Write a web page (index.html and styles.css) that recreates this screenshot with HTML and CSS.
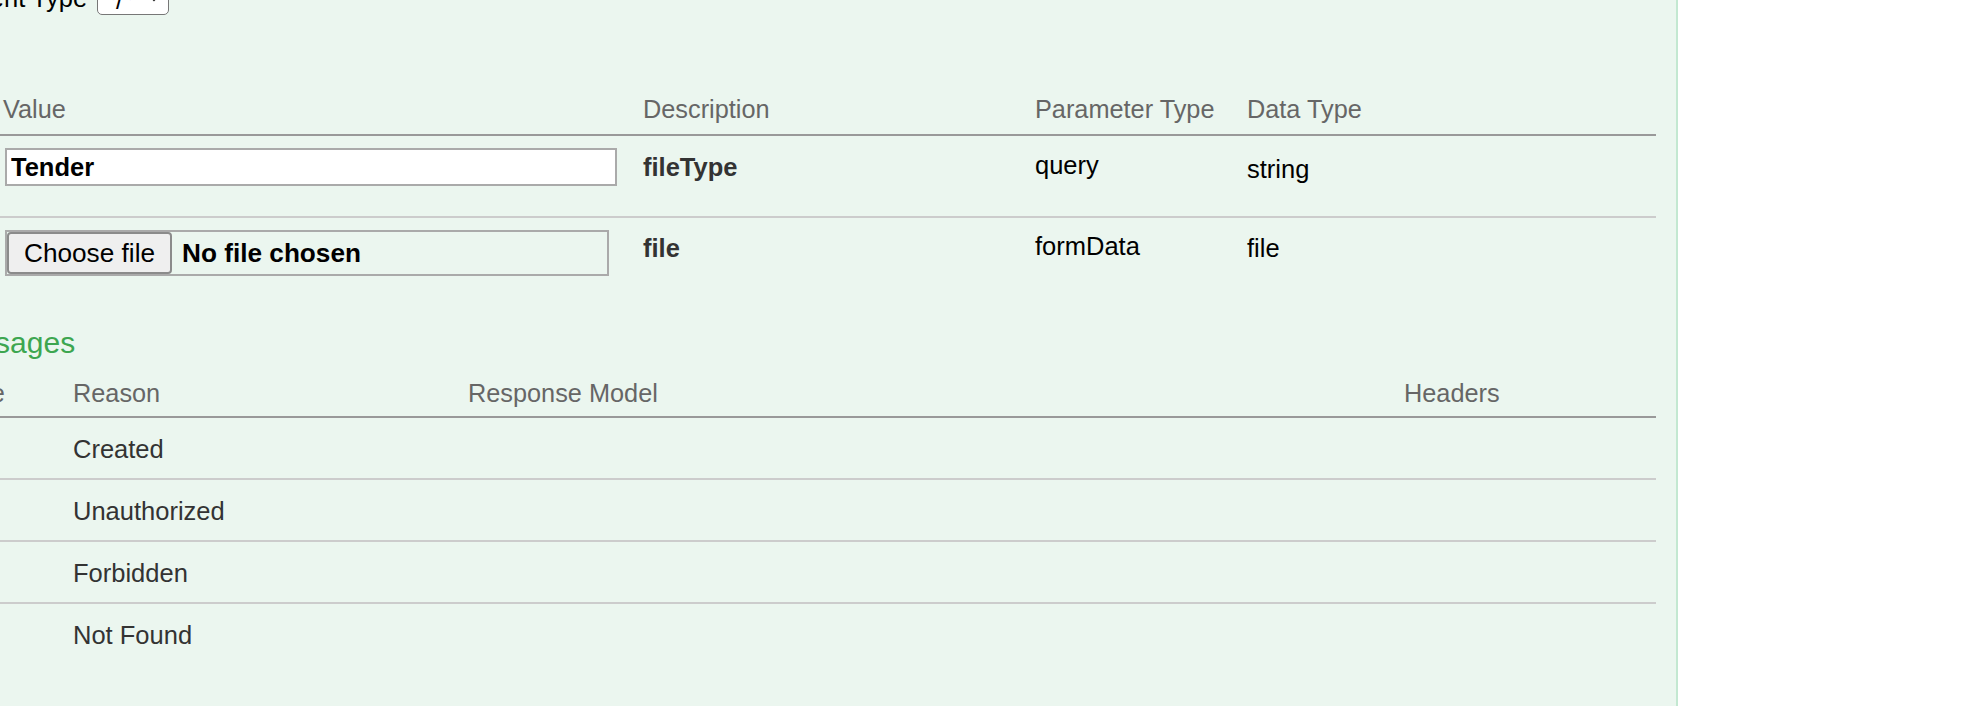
FILE: index.html
```html
<!DOCTYPE html>
<html lang="en">
<head>
<meta charset="utf-8">
<title>Swagger operation</title>
<link rel="stylesheet" href="styles.css">
</head>
<body>
<div class="panel">
  <div class="ct">
    <label class="ct-label">Response Content Type</label>
    <span class="select"><span class="select-val">*/*</span><svg class="chev" width="12" height="8" viewBox="0 0 12 8"><polyline points="1,1 6,6 11,1" fill="none" stroke="#222" stroke-width="2"/></svg></span>
  </div>

  <h4 class="sec-h">Parameters</h4>
  <table class="params">
    <colgroup>
      <col class="p-c1"><col class="p-c2"><col class="p-c3"><col class="p-c4"><col>
    </colgroup>
    <thead>
      <tr><th>Parameter</th><th>Value</th><th>Description</th><th>Parameter Type</th><th>Data Type</th></tr>
    </thead>
    <tbody>
      <tr class="r1">
        <td class="name">fileType</td>
        <td class="val"><input class="text-input" type="text" value="Tender"></td>
        <td class="desc">fileType</td>
        <td class="ptype">query</td>
        <td class="dtype">string</td>
      </tr>
      <tr class="r2">
        <td class="name">file</td>
        <td class="val"><div class="file-input"><span class="file-btn">Choose file</span><span class="file-name">No file chosen</span></div></td>
        <td class="desc">file</td>
        <td class="ptype">formData</td>
        <td class="dtype">file</td>
      </tr>
    </tbody>
  </table>

  <h4 class="sec-h resp-h">Response Messages</h4>
  <table class="resp">
    <colgroup>
      <col class="r-c1"><col class="r-c2"><col class="r-c3"><col>
    </colgroup>
    <thead>
      <tr><th>HTTP Status Code</th><th>Reason</th><th>Response Model</th><th>Headers</th></tr>
    </thead>
    <tbody>
      <tr><td>201</td><td>Created</td><td></td><td></td></tr>
      <tr><td>401</td><td>Unauthorized</td><td></td><td></td></tr>
      <tr><td>403</td><td>Forbidden</td><td></td><td></td></tr>
      <tr><td>404</td><td>Not Found</td><td></td><td></td></tr>
    </tbody>
  </table>
</div>
</body>
</html>
```
FILE: styles.css
```css
html, body {
  margin: 0;
  padding: 0;
  background: #ffffff;
}
body {
  font-family: "Liberation Sans", Arial, Helvetica, sans-serif;
  overflow: hidden;
}
.panel {
  box-sizing: border-box;
  width: 1905px;
  margin: -30px 0 0 -227px;
  padding: 0 20px 42px;
  background: #ebf6ef;
  border-right: 2px solid #c3e8d1;
}

/* content type row */
.ct {
  display: flex;
  align-items: flex-end;
  gap: 10px;
  height: 45px;
  padding-left: 21px;
}
.ct-label {
  font-size: 25.5px;
  line-height: 20px;
  color: #000;
  margin-bottom: 7px;
}
.select {
  box-sizing: border-box;
  width: 72px;
  height: 45px;
  display: flex;
  align-items: flex-end;
  justify-content: space-between;
  padding: 0 8px 4px;
  border: 1.5px solid #777;
  border-radius: 5px;
  background: #fff;
  font-size: 25.5px;
  line-height: 20px;
  color: #000;
}
.chev {
  margin-bottom: 8px;
}

/* headings */
.sec-h {
  font-size: 30px;
  line-height: 36px;
  font-weight: normal;
  color: #3da650;
  margin: 20px 0 23px;
}
.resp-h {
  margin: 19px 0 17px 2px;
}

/* tables */
table {
  width: 100%;
  border-collapse: separate;
  border-spacing: 0;
  table-layout: fixed;
}
.p-c1 { width: 210px; }
.p-c2 { width: 640px; }
.p-c3 { width: 392px; }
.p-c4 { width: 212px; }
.r-c1 { width: 280px; }
.r-c2 { width: 395px; }
.r-c3 { width: 936px; }

th {
  text-align: left;
  font-weight: normal;
  color: #666;
  font-size: 25.3px;
  line-height: 30px;
  padding: 0 0 10px;
  border-bottom: 2px solid #999;
  white-space: nowrap;
}
.resp th {
  padding-bottom: 8px;
}
td {
  vertical-align: top;
  font-size: 25.5px;
  line-height: 36px;
  padding: 0;
  white-space: nowrap;
}
tbody tr + tr td {
  border-top: 2px solid #ccc;
}

/* parameter rows */
.params .val {
  padding: 12px 0 30px;
}
.params .name,
.params .desc {
  font-weight: bold;
  color: #333;
  padding-top: 12px;
}
.params .r1 .desc { padding-top: 13px; }
.params .ptype {
  color: #000;
  padding-top: 10px;
}
.params .r1 .ptype { padding-top: 10.5px; }
.params .dtype {
  color: #000;
  padding-top: 12px;
}
.params .r1 .dtype { padding-top: 14.5px; }

.text-input {
  display: block;
  box-sizing: border-box;
  width: 612px;
  height: 38px;
  margin: 0 0 0 2px;
  padding: 0 4px;
  border: 2px solid #aaa;
  border-radius: 0;
  background: #fff;
  font-family: "Liberation Sans", Arial, Helvetica, sans-serif;
  font-weight: bold;
  font-size: 25.5px;
  color: #000;
  outline: none;
}
.file-input {
  display: flex;
  align-items: stretch;
  gap: 10px;
  box-sizing: border-box;
  width: 604px;
  height: 46px;
  margin-left: 2px;
  border: 2px solid #aaa;
}
.file-btn {
  display: flex;
  align-items: center;
  box-sizing: border-box;
  padding: 0 15px;
  border: 2px solid #8b8b8b;
  border-radius: 4px;
  background: #efefef;
  font-size: 26.2px;
  line-height: 30px;
  color: #000;
}
.file-name {
  align-self: center;
  font-weight: bold;
  font-size: 26.2px;
  line-height: 30px;
  color: #000;
}

/* response rows */
.resp td {
  padding: 12.5px 0 11.5px;
  color: #333;
}
```
